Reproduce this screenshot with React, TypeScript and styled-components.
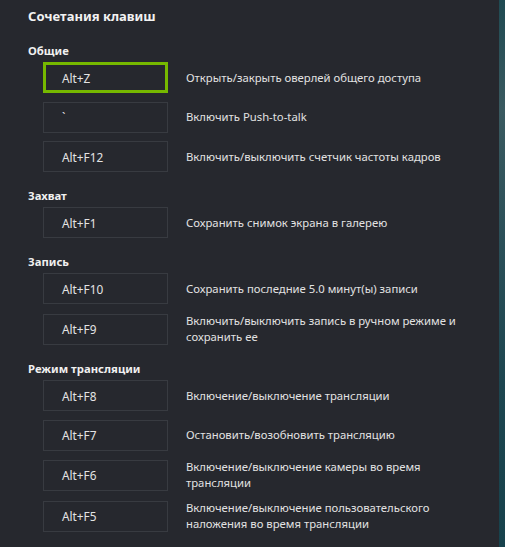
import styled, { createGlobalStyle } from "styled-components";

const GlobalStyle = createGlobalStyle`
    html, body {
        margin: 0;
        padding: 0;
        background: #26282e;
    }
    body {
        font-family: "Noto Sans", "Open Sans", sans-serif;
        -webkit-font-smoothing: antialiased;
    }
`;

const Page = styled.div`
    display: flex;
    width: 505px;
    height: 547px;
    overflow: hidden;
    background: #26282e;
`;

const Panel = styled.div`
    flex: 1;
    display: flex;
    flex-direction: column;
    padding: 8px 0 0 28px;
`;

const EdgeStrip = styled.div`
    width: 6px;
    background: linear-gradient(180deg, #1f4a52 0%, #3a5a60 20%, #2a4f58 45%, #1d4650 70%, #17424c 100%);
`;

const Title = styled.h1`
    margin: 0 0 20px;
    font-size: 13px;
    line-height: 16px;
    font-weight: 700;
    color: #f2f2f2;
`;

const Section = styled.section`
    display: flex;
    flex-direction: column;
    margin-bottom: 17px;
`;

const SectionLabel = styled.h2`
    margin: 0 0 4px;
    font-size: 11.3px;
    line-height: 14px;
    font-weight: 700;
    color: #f0f0f0;
`;

const Rows = styled.div`
    display: flex;
    flex-direction: column;
    gap: 8.7px;
    padding-left: 15px;
`;

const Row = styled.div`
    display: flex;
    align-items: center;
    gap: 18px;
`;

const KeyBox = styled.div<{ $active?: boolean }>`
    box-sizing: border-box;
    width: 125px;
    height: 31px;
    flex-shrink: 0;
    display: flex;
    align-items: center;
    padding-left: ${({ $active }) => ($active ? "16px" : "18px")};
    border: ${({ $active }) => ($active ? "3px solid #76b900" : "1px solid #383b41")};
    font-size: 11.8px;
    color: #e4e4e4;
`;

const Description = styled.div`
    width: 290px;
    font-size: 11.3px;
    line-height: 16px;
    color: #e2e2e2;
`;

type Shortcut = { keys: string; text: string; active?: boolean };

const groups: { label: string; items: Shortcut[] }[] = [
    {
        label: "Общие",
        items: [
            { keys: "Alt+Z", text: "Открыть/закрыть оверлей общего доступа", active: true },
            { keys: "`", text: "Включить Push-to-talk" },
            { keys: "Alt+F12", text: "Включить/выключить счетчик частоты кадров" },
        ],
    },
    {
        label: "Захват",
        items: [{ keys: "Alt+F1", text: "Сохранить снимок экрана в галерею" }],
    },
    {
        label: "Запись",
        items: [
            { keys: "Alt+F10", text: "Сохранить последние 5.0 минут(ы) записи" },
            { keys: "Alt+F9", text: "Включить/выключить запись в ручном режиме и сохранить ее" },
        ],
    },
    {
        label: "Режим трансляции",
        items: [
            { keys: "Alt+F8", text: "Включение/выключение трансляции" },
            { keys: "Alt+F7", text: "Остановить/возобновить трансляцию" },
            { keys: "Alt+F6", text: "Включение/выключение камеры во время трансляции" },
            { keys: "Alt+F5", text: "Включение/выключение пользовательского наложения во время трансляции" },
        ],
    },
];

export default function App() {
    return (
        <>
            <GlobalStyle />
            <Page>
                <Panel>
                    <Title>Сочетания клавиш</Title>
                    {groups.map((g) => (
                        <Section key={g.label}>
                            <SectionLabel>{g.label}</SectionLabel>
                            <Rows>
                                {g.items.map((s) => (
                                    <Row key={s.keys}>
                                        <KeyBox $active={s.active}>{s.keys}</KeyBox>
                                        <Description>{s.text}</Description>
                                    </Row>
                                ))}
                            </Rows>
                        </Section>
                    ))}
                </Panel>
                <EdgeStrip />
            </Page>
        </>
    );
}
